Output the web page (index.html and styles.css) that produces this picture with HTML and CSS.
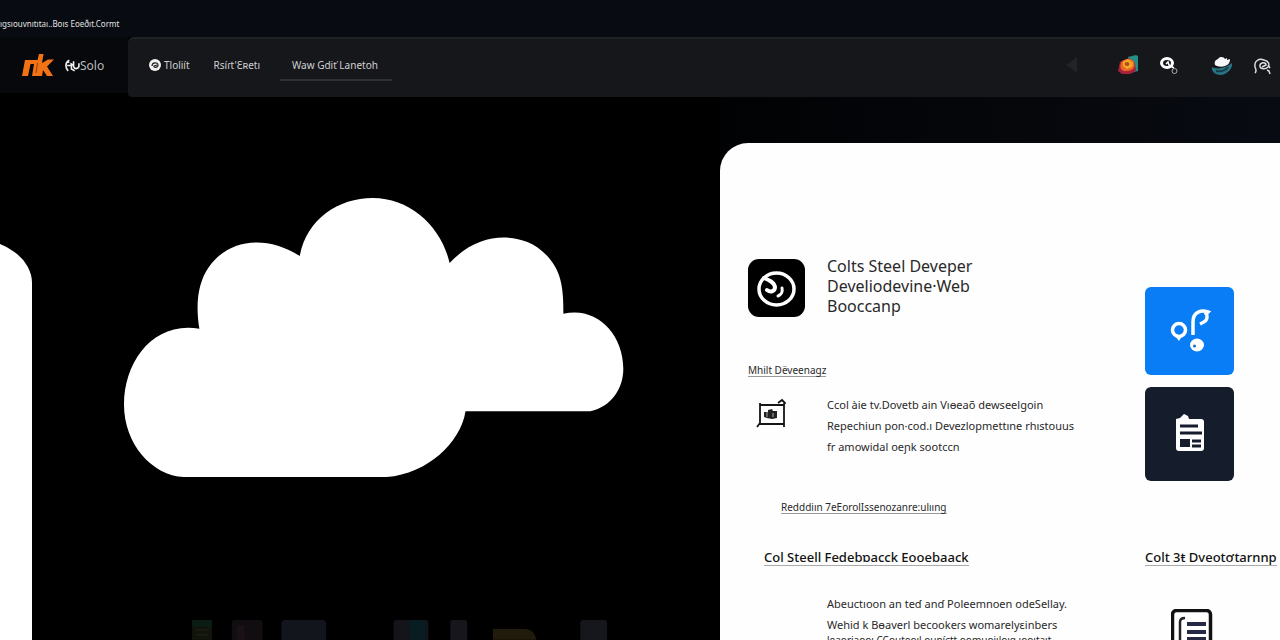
FILE: index.html
```
<!DOCTYPE html>
<html lang="en">
<head>
<meta charset="utf-8">
<title>Colt Steel Developer Bootcamp</title>
<link rel="stylesheet" href="styles.css">
</head>
<body>
<div class="app">
  <div class="tagline">ıgsıouvnıtıtaı..Boıs Eoeðıt.Cormt</div>
  <header class="topbar">
    <a class="brand" href="#">
      <svg class="brand-logo" viewBox="0 0 32 22" aria-hidden="true">
        <path fill="#f47216" d="M3 6h12.500L17 0h4.500l-1.500 9L26 5.500h6l-7 7L31 22h-6l-4-6-1 6H10l2-12H8.500L6 22H0z"/>
        <path fill="#8d4512" d="M15 9h1L14.500 19h-1z"/>
      </svg>
      <span class="brand-name"><svg class="brand-mark" viewBox="0 0 14 12" aria-hidden="true"><g fill="none" stroke="#eee" stroke-width="1.500"><path d="M4 1C0 3 0 8 3 11M4 3H2M2 6h4v4M8 2v5c1 3 4 2 5 0V4M6 9l3 2M5 4l3 2"/></g></svg>Solo</span>
    </a>
    <nav class="menu">
      <a class="menu-link" href="#"><svg class="menu-icon" viewBox="0 0 12 12" aria-hidden="true"><circle cx="6" cy="6" r="6" fill="#f2f2f2"/><path d="M3 7c0-4 6-4 6-1s-5 3-4 1l3-1" fill="none" stroke="#222" stroke-width="1.200"/></svg>Tloliít</a>
      <a class="menu-link" href="#">Rsíɾt'Ɛʀetı</a>
      <a class="menu-link menu-link-active" href="#">Waw Gdiť Lanetoh</a>
      <div class="tools">
        <button class="tool tool-back" aria-label="Back"><svg viewBox="0 0 24 24"><path d="M5 12 16 4v16z" fill="#222327"/></svg></button>
        <button class="tool" aria-label="Apps"><svg viewBox="0 0 24 24"><path d="M11 4l8-2 2 1v15l-7 2z" fill="#248f86"/><path d="M3 9l9-4 6 5 1 8-6 3H5l-4-3z" fill="#a5223b"/><path d="M4 10c1-4 11-6 13-1 2 6-2 9-7 9-5 1-8-3-6-8z" fill="#ed6524"/><path d="M6 9l5-3 5 4-1 4-5 2-4-3z" fill="#f6a928"/><ellipse cx="10" cy="11" rx="2.500" ry="2" fill="#b64b22"/></svg></button>
        <button class="tool tool-search" aria-label="Search"><svg viewBox="0 0 24 24"><ellipse cx="10" cy="10" rx="5.500" ry="4.500" fill="none" stroke="#fff" stroke-width="3"/><path d="M9 11l2-2 1 3 5 3" fill="none" stroke="#fff" stroke-width="1.500"/><circle cx="17.500" cy="18" r="2.500" fill="none" stroke="#aaa"/></svg></button>
        <button class="tool tool-cloud" aria-label="Cloud"><svg viewBox="0 0 24 24"><path d="M1 14c5 3 14 1 20-4 1 5-4 11-11 12-5 0-10-3-9-8z" fill="#287484"/><path d="M5 18c5 1 9 0 12-4" fill="none" stroke="#143c48" stroke-width="2"/><path d="M4 12c-1-3 0-5 3-6 2-3 6-2 7 0l2-1v2l3-1c0 4-2 6-5 7-3 1-7 1-10-1z" fill="#f6f7f8"/></svg></button>
        <button class="tool" aria-label="Account"><svg viewBox="0 0 24 24" fill="none" stroke="#ddd" stroke-width="1.500"><path d="M4 20c2-2 1-4 0-6-1-6 4-9 9-7 5 1 6 5 4 7-3 3-9 2-8-2 1-3 6-3 6 0l-4 2M17 12l2 3M16 17l2 1 1 3"/></svg></button>
      </div>
    </nav>
  </header>
  <main class="stage">
    <aside class="side-card"></aside>
    <section class="hero">
      <svg class="cloud" viewBox="124 198 500 280" role="img" aria-label="Cloud">
        <path fill="#fff" d="M199.500 329C195 302 199 281 209 267C228 240 265 234 300 256C307 219 339 198 373 198C411 198 442 227 450 263C477 235 506 234 528 242C543 248 557 263 561 280C564 291 564 306 564 314C595 306 624 332 624 369C624 389 612 407 591 411.500H466C461 443 428 474 387 477.500H184C152 476 124 444 124 405C124 361 154 321 199.500 329Z"/>
      </svg>
      <svg class="dock" viewBox="0 0 420 20" aria-hidden="true">
        <path d="M0 0h20v20H0z" fill="#11140d"/><path d="M0 0h20v7H0z" fill="#0b1c14"/><path d="M3 10h14M4 15h12" stroke="#272513"/>
        <rect x="40" width="31" height="24" rx="3" fill="#110d10"/><path d="M45 5h8v15h-8z" fill="#191116"/>
        <rect x="90" width="45" height="24" rx="4" fill="#13151c"/>
        <rect x="203" width="35" height="24" rx="3" fill="#14141a"/><path d="M219 0h16v20h-16z" fill="#071d21"/>
        <rect x="260" width="17" height="24" rx="2" fill="#16161c"/>
        <path d="M303 9h33q8 0 11 11h-44z" fill="#211b0b"/>
        <rect x="391" width="27" height="24" rx="3" fill="#15171d"/>
      </svg>
    </section>
    <section class="panel">
      <div class="course">
        <div class="course-head">
          <svg class="course-icon" viewBox="0 0 57 58" aria-hidden="true"><rect width="57" height="58" rx="11"/><g fill="none" stroke="#fff" stroke-linecap="round"><ellipse cx="28.500" cy="30" rx="17.500" ry="16" stroke-width="3.500"/><path d="M16 19c5 2 10 4 11 9 0 4-4 6-8 3" stroke-width="4"/><path d="M34 29c1 4-1 7-4 8" stroke-width="3"/></g></svg>
          <h1 class="course-title">Colts Steel Deveper<br>Develiodevine·Web<br>Booccanp</h1>
        </div>
        <a class="small-link" href="#">Mhilt Dëveenagz</a>
        <div class="lesson">
          <svg class="lesson-icon" viewBox="0 0 32 32" aria-hidden="true"><path d="M4 7h24v19H4zM1 29l3-4M28 25v4M4 7V5M22 5l4-3 3 3-2 2" fill="none" stroke="#151515" stroke-width="1.800"/><path d="M8 14h4v-2l4-1 1 2h4v7l-5 1-5-1-3-1z" fill="#222"/><path d="M11 14v5M17 15v4" stroke="#aaa"/></svg>
          <p class="lesson-text">Ccol àie tv.Dovetb ain Vıɵeaõ dewseelgoin<br>Repechiun pon·cod.ı Devezlopmettıne rhıstouus<br>fr amowidal oeɲk sootccn</p>
        </div>
        <a class="small-link small-link-inset" href="#">Redddiın 7eEorolIssenozanre:ulııng</a>
        <h2 class="heading"><a href="#">Col Steell Fedebɒacck Eooebaack</a></h2>
        <div class="feedback">
          <p class="lesson-text">Abeuctıoon an teɗ anɗ Poleemnoen odeSellay.<br>Wehid k Bɵaverl becookeɾs womarelyɛinbers</p>
          <p class="feedback-more">leaoriaooı CCouteoıl ouníctt oomuoiıloıg ıooıtaıt</p>
        </div>
      </div>
      <div class="related">
        <button class="tile tile-blue" aria-label="Audio lessons"><svg viewBox="0 0 48 48" fill="none" stroke="#fff"><circle cx="13" cy="23" r="6.500" stroke-width="3.500"/><path d="M9 29h7l-3 5z" fill="#fff" stroke="none"/><path d="M27 28V15C27 4 36 3 42 5l-3 3M40 5c3 8-1 10-6 12" stroke-width="3.500"/><ellipse cx="31" cy="38" rx="7" ry="6.500" fill="#fff" stroke="none"/><circle cx="28.500" cy="39" r="1.500" fill="#176aca" stroke="none"/></svg></button>
        <button class="tile tile-dark" aria-label="Reading list"><svg viewBox="0 0 48 48"><path d="M10 9l4-1 4-4 4 2 1 3h12q3 0 3 3v26q0 3-3 3H13q-3 0-3-3z" fill="#fff"/><path d="M14 16h18M14 23h22M26 31h9M26 36h9" stroke="#151c2c" stroke-width="3"/><path d="M14 29h10v8H14z" fill="#151c2c"/></svg></button>
        <h2 class="heading related-heading"><a href="#">Colt 3ŧ Dveotơtarnnp</a></h2>
        <svg class="doc-icon" viewBox="0 0 42 50" aria-hidden="true"><rect x="1.500" y="1.500" width="38" height="50" rx="4" fill="#fff" stroke="#111" stroke-width="3.500"/><path d="M9 50V13q0-4 5-4" fill="none" stroke="#222" stroke-width="2.500"/><path d="M16 15h19M16 23h19M16 30h19M16 38h19" stroke="#252943" stroke-width="4"/></svg>
      </div>
    </section>
  </main>
</div>
</body>
</html>
```
FILE: styles.css
```
* { box-sizing: border-box; }
body {
  margin: 0;
  background: #000;
  font-family: "Noto Sans", "Open Sans", sans-serif;
}
a { color: inherit; text-decoration: none; }
svg { display: block; }
h1, h2, p { margin: 0; }
button { border: 0; padding: 0; background: none; }

.app {
  display: flex;
  flex-direction: column;
  height: 100vh;
  overflow: hidden;
  background: linear-gradient(90deg, #000 45%, #080b12);
}
.tagline {
  flex: none;
  height: 37px;
  padding-top: 18px;
  background: #080b11;
  color: #e2e2e2;
  font-size: 8px;
  line-height: 12px;
  white-space: nowrap;
}
.topbar { display: flex; flex: none; height: 60px; }
.brand {
  display: flex;
  align-items: center;
  gap: 11px;
  flex: 0 0 128px;
  padding-left: 22px;
  height: 56px;
  background: #07080b;
}
.brand-logo { width: 32px; height: 22px; }
.brand-name {
  display: flex;
  align-items: center;
  color: #bbb;
  font-size: 12px;
}
.brand-mark { width: 15px; height: 13px; }
.menu {
  display: flex;
  flex: 1;
  align-items: flex-start;
  padding: 12px 5px 0 9px;
  border-top: 2px solid #202125;
  border-radius: 6px 0 0 4px;
  background: #16171b;
}
.menu-link {
  display: flex;
  align-items: center;
  gap: 3px;
  height: 30px;
  padding: 0 12px 2px;
  color: #d0d0d2;
  font-size: 10px;
}
.menu-icon { width: 12px; height: 12px; }
.menu-link-active { margin-left: 8px; padding-right: 14px; padding-bottom: 0; border-bottom: 2px solid #303136; }
.tools { display: flex; gap: 16px; height: 28px; margin-left: auto; align-items: center; }
.tool { width: 24px; height: 24px; }
.tool-back { margin-right: 16px; }
.tool-search { margin-right: 14px; }

.stage { display: flex; flex: 1; min-height: 0; }
.side-card {
  flex: 0 0 92px;
  margin: 142px 0 0 -60px;
  border-radius: 0 60px 0 0 / 0 44px 0 0;
  background: #fff;
}
.hero {
  display: flex;
  flex: 1;
  flex-direction: column;
  align-items: center;
  padding: 101px 4px 0 0;
  background: #000;
}
.cloud { width: 73%; max-width: 640px; }
.dock { width: 61%; margin: auto 0 0 54px; }

.panel {
  display: flex;
  flex: 0 0 560px;
  margin-top: 46px;
  padding-left: 28px;
  border-radius: 28px 0 0 0;
  background: #fefefe;
  color: #292929;
}
.course { flex: 1; padding-top: 113px; }
.course-head { display: flex; gap: 22px; align-items: flex-start; margin-bottom: 47px; }
.course-icon { width: 57px; height: 58px; margin-top: 3px; }
.course-title { font-size: 16px; font-weight: 400; line-height: 20px; }
.small-link {
  display: table;
  border-bottom: 1px solid #999;
  font-size: 10px;
  line-height: 12px;
}
.lesson { display: flex; gap: 40px; margin: 17px 0 44px; padding-left: 8px; }
.lesson-icon { width: 32px; height: 32px; margin-top: 4px; }
.lesson-text { font-size: 11px; line-height: 21px; white-space: nowrap; }
.lesson .lesson-text { margin-left: -1px; }
.small-link-inset { margin-left: 33px; }
.heading { margin-top: 33px; font-size: 13px; font-weight: 500; line-height: 20px; color: #111; white-space: nowrap; }
.heading a { display: inline-block; border-bottom: 1px solid #aaa; line-height: 16px; }
.course .heading { margin-left: 16px; }
.feedback { margin-top: 26px; padding-left: 79px; }
.feedback-more { font-size: 10px; line-height: 10px; white-space: nowrap; }
.related { flex: 0 0 135px; min-width: 0; padding-top: 144px; }
.tile {
  display: flex;
  align-items: center;
  justify-content: center;
  width: 89px;
  border-radius: 6px;
}
.tile svg { width: 48px; height: 48px; }
.tile-blue { height: 88px; margin-bottom: 12px; background: #087df5; }
.tile-dark { height: 94px; background: #151c2c; }
.related-heading { margin-top: 66px; }
.doc-icon { width: 42px; height: 50px; margin: 42px 0 0 26px; }
```
